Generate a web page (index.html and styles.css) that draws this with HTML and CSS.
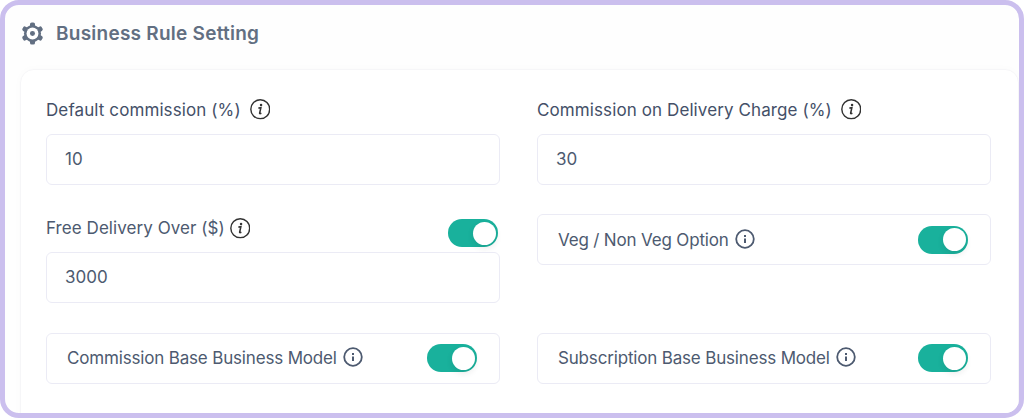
FILE: index.html
```html
<!DOCTYPE html>
<html lang="en">

<head>
    <meta charset="UTF-8">
    <meta name="viewport" content="width=device-width, initial-scale=1.0">
    <title>Business Rule Setting</title>
    <link rel="stylesheet" href="styles.css">
</head>

<body>
    <svg class="sprite" aria-hidden="true">
        <symbol id="info-italic" viewBox="0 0 20 20">
            <circle cx="10" cy="10" r="9.2" fill="none" stroke="currentColor" stroke-width="1.4"/>
            <circle cx="10.8" cy="5.8" r="1.2" fill="currentColor"/>
            <path d="M8.2 8.9 L10.6 8.5 L9.4 13.9 Q9.3 14.7 11.1 13.9" fill="none" stroke="currentColor" stroke-width="1.5"/>
        </symbol>
        <symbol id="info-round" viewBox="0 0 20 20">
            <circle cx="10" cy="10" r="8.8" fill="none" stroke="currentColor" stroke-width="1.8"/>
            <path d="M9 5.9h2v2H9zM9 9.4h2v4.6H9z" fill="currentColor"/>
        </symbol>
    </svg>

    <div class="frame">
        <header class="page-header">
            <svg class="gear" viewBox="0 0 24 24">
                <g fill="currentColor">
                    <rect x="9.4" y="0.4" width="5.2" height="23.2" rx="1.8"/>
                    <rect x="9.4" y="0.4" width="5.2" height="23.2" rx="1.8" transform="rotate(60 12 12)"/>
                    <rect x="9.4" y="0.4" width="5.2" height="23.2" rx="1.8" transform="rotate(120 12 12)"/>
                    <circle cx="12" cy="12" r="8.9"/>
                </g>
                <circle cx="12" cy="12" r="6.2" fill="#fff"/>
                <circle cx="12" cy="12" r="2.6" fill="currentColor"/>
            </svg>
            <h1>Business Rule Setting</h1>
        </header>

        <form class="card">
            <div class="field">
                <label for="commission" class="strong"><span>Default commission (%)</span>
                    <svg class="info"><use href="#info-italic"/></svg>
                </label>
                <input type="text" id="commission" value="10">
            </div>

            <div class="field">
                <label for="delivery" class="strong"><span>Commission on Delivery Charge (%)</span>
                    <svg class="info"><use href="#info-italic"/></svg>
                </label>
                <input type="text" id="delivery" value="30">
            </div>

            <div class="field">
                <div class="label-row">
                    <label for="free"><span>Free Delivery Over ($)</span>
                        <svg class="info"><use href="#info-italic"/></svg>
                    </label>
                    <span class="toggle"></span>
                </div>
                <input type="text" id="free" value="3000">
            </div>

            <div class="option">
                <span>Veg / Non Veg Option</span>
                <svg class="info-sm"><use href="#info-round"/></svg>
                <span class="toggle"></span>
            </div>

            <div class="option">
                <span>Commission Base Business Model</span>
                <svg class="info-sm"><use href="#info-round"/></svg>
                <span class="toggle"></span>
            </div>

            <div class="option">
                <span>Subscription Base Business Model</span>
                <svg class="info-sm"><use href="#info-round"/></svg>
                <span class="toggle"></span>
            </div>
        </form>
    </div>
</body>

</html>
```
FILE: styles.css
```css
* {
    box-sizing: border-box;
}

body {
    margin: 0;
    height: 419px;
    overflow: hidden;
    background: #fff;
    font-family: Inter, "Liberation Sans", sans-serif;
    font-size: 17px;
    color: #4d5a70;
}

.sprite {
    display: none;
}

.frame {
    height: 418px;
    border: 5px solid #cbbfee;
    border-radius: 19px;
    overflow: hidden;
    background: #fefefe;
}

.page-header {
    display: flex;
    align-items: center;
    gap: 12px;
    height: 64px;
    padding: 0 0 7px 16px;
    color: #626f82;
}

.page-header h1 {
    margin: 0;
    font-size: 19px;
    font-weight: 600;
    letter-spacing: 0.25px;
}

.gear {
    width: 23px;
    height: 23px;
}

.card {
    display: grid;
    grid-template-columns: 454px 454px;
    column-gap: 37px;
    row-gap: 29.4px;
    align-items: start;
    align-content: start;
    width: 999px;
    height: 400px;
    margin-left: 15px;
    padding: 27px 0 0 25px;
    border: 1px solid #f6f6f8;
    border-radius: 14px;
    background: #fff;
    box-shadow: 0 0 8px rgba(30, 40, 70, 0.02);
}

label {
    display: flex;
    align-items: center;
    gap: 5px;
    height: 28px;
    letter-spacing: 0.06px;
}

label.strong {
    gap: 9px;
    height: 37px;
    padding-bottom: 12px;
    color: #445068;
    letter-spacing: 0.1px;
}

.label-row {
    display: flex;
    justify-content: space-between;
    height: 38px;
    padding-right: 2px;
}

.label-row .toggle {
    margin-top: 5px;
}

input {
    display: block;
    width: 454px;
    height: 51px;
    padding: 0 18px 1px;
    border: 1px solid #ebebf5;
    border-radius: 6px;
    background: #fff;
    font: inherit;
    color: #4d5a70;
}

.info {
    width: 20.5px;
    height: 20.5px;
    color: #333;
}

.info-sm {
    width: 20px;
    height: 20px;
    margin: 0 0 2px 6px;
}

.option {
    display: flex;
    align-items: center;
    height: 51px;
    padding: 0 22px 0 20px;
    border: 1px solid #ebebf5;
    border-radius: 6px;
    letter-spacing: -0.17px;
}

.toggle {
    display: flex;
    justify-content: flex-end;
    width: 50px;
    height: 28px;
    margin-left: auto;
    padding: 2.5px;
    border-radius: 14px;
    background: #19b19c;
}

.toggle::after {
    content: "";
    width: 23px;
    height: 23px;
    border-radius: 50%;
    background: #fff;
    box-shadow: 0 3px 6px rgba(40, 40, 40, 0.1);
}
```
